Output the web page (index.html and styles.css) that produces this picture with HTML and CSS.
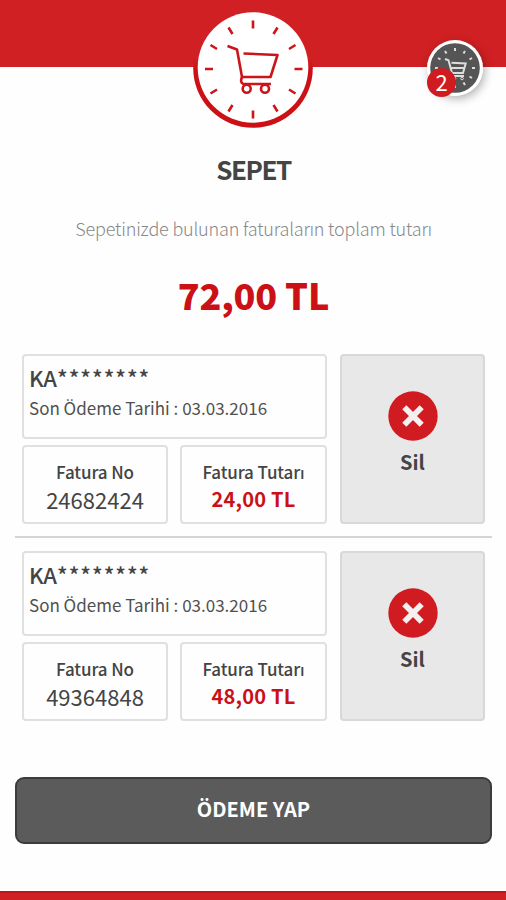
FILE: index.html
```html
<!DOCTYPE html>
<html lang="tr">
<head>
  <meta charset="UTF-8">
  <title>Sepet</title>
  <link rel="stylesheet" href="styles.css">
</head>
<body>
  <!-- Header -->
  <div class="header">
    <svg class="logo" viewBox="0 0 120 120" fill="none" stroke="#cc1419">
      <!-- ring blends into the header at the top -->
      <linearGradient id="ring" x1="0" y1="0" x2="0" y2="1">
        <stop offset="0.42" stop-color="#d02023"/>
        <stop offset="0.52" stop-color="#cb1016"/>
      </linearGradient>
      <circle cx="60" cy="60" r="59.800" fill="url(#ring)" stroke="none"/>
      <circle cx="60" cy="59.500" r="55.300" fill="#fff" stroke="none"/>
      <g stroke-width="2.600">
        <path d="M60 12.500v8M60 102.500v8M12 61h8M101.500 61h8"/>
        <path d="M35.500 19.500l4 6.500M84.500 19.500l-4 6.500M17.500 37l6.500 4M102.500 37l-6.500 4"/>
        <path d="M17.500 85.500l6.500-4M102.500 85.500l-6.500-4M35.500 103.500l4-6.500M84.500 103.500l-4-6.500"/>
      </g>
      <g stroke-width="2.600" stroke-linejoin="round">
        <path d="M34.500 38l9.500 3.500 5 27.500h28.500l7-22-34-1.500"/>
        <path d="M49 69c-1.500 3.500-1 6.500 1.500 7h27.500"/>
        <circle cx="53.700" cy="80.800" r="4"/>
        <circle cx="72" cy="80.800" r="4"/>
      </g>
    </svg>
    <div class="cart-badge">
      <svg viewBox="0 0 56 56" fill="none" stroke="#ddd">
        <circle cx="28" cy="28" r="28" fill="#fff" stroke="none"/>
        <circle cx="28" cy="28" r="24.800" fill="#555" stroke="none"/>
        <g stroke-width="2">
          <path d="M28 8v3M28 45v3M8 28h3M45 28h3"/>
          <path d="M18 11l1.500 2.500M38 11l-1.500 2.500M11 18l2.500 1.500M45 18l-2.500 1.500M45 38l-2.500-1.500M38 45l-1.500-2.500"/>
        </g>
        <path stroke-width="2" d="M18 19l3.500 1.300 3.500 12.700h11l2.700-9.500-14.200-.8M26 36h11M24.500 28h12.500"/>
        <circle cx="27.500" cy="38.500" r="1.300"/>
        <circle cx="35" cy="38.500" r="1.300"/>
      </svg>
      <span class="count">2</span>
    </div>
  </div>

  <div class="content">
    <h1 class="title">SEPET</h1>
    <p class="subtitle">Sepetinizde bulunan faturaların toplam tutarı</p>
    <p class="total">72,00 TL</p>

    <!-- Bills -->
    <div class="bill">
      <div class="bill-info">
        <div class="box owner">
          <h2 class="name">KA<span class="mask">********</span></h2>
          <p class="due">Son Ödeme Tarihi : 03.03.2016</p>
        </div>
        <div class="box detail">
          <span class="label">Fatura No</span>
          <span class="number">24682424</span>
        </div>
        <div class="box detail">
          <span class="label">Fatura Tutarı</span>
          <span class="amount">24,00 TL</span>
        </div>
      </div>
      <button class="box delete-btn">
        <svg class="delete-icon" viewBox="0 0 50 50">
          <circle cx="25" cy="25" r="24.700" fill="#d01c21"/>
          <path d="M16.300 16.300l17.400 17.400M33.700 16.300l-17.400 17.400" stroke="#f4f0f0" stroke-width="5.800"/>
        </svg>
        <span>Sil</span>
      </button>
    </div>

    <div class="bill">
      <div class="bill-info">
        <div class="box owner">
          <h2 class="name">KA<span class="mask">********</span></h2>
          <p class="due">Son Ödeme Tarihi : 03.03.2016</p>
        </div>
        <div class="box detail">
          <span class="label">Fatura No</span>
          <span class="number">49364848</span>
        </div>
        <div class="box detail">
          <span class="label">Fatura Tutarı</span>
          <span class="amount">48,00 TL</span>
        </div>
      </div>
      <button class="box delete-btn">
        <svg class="delete-icon" viewBox="0 0 50 50">
          <circle cx="25" cy="25" r="24.700" fill="#d01c21"/>
          <path d="M16.300 16.300l17.400 17.400M33.700 16.300l-17.400 17.400" stroke="#f4f0f0" stroke-width="5.800"/>
        </svg>
        <span>Sil</span>
      </button>
    </div>

    <button class="pay-btn">ÖDEME YAP</button>
  </div>

  <!-- Footer -->
  <div class="footer"></div>
</body>
</html>
```
FILE: styles.css
```css
* {
  box-sizing: border-box;
}

body {
  font-family: "Noto Sans CJK SC", "Noto Sans", sans-serif;
  margin: 0;
  height: 900px;
  display: flex;
  flex-direction: column;
  background-color: #fefefe;
  color: #444;
}

h1, h2, p {
  margin: 0;
}

button {
  font-family: inherit;
  color: inherit;
}

.header {
  position: relative;
  display: flex;
  justify-content: center;
  align-items: flex-start;
  height: 67px;
  background-color: #d02023;
}

.logo {
  flex: none;
  width: 120px;
  height: 120px;
  margin-top: 8px;
}

.cart-badge {
  position: absolute;
  top: 40px;
  left: 427px;
  width: 56px;
  height: 56px;
  border-radius: 50%;
  box-shadow: 2px 3px 10px rgba(0,0,0,0.3);
}

.cart-badge svg {
  display: block;
}

.count {
  position: absolute;
  left: 0;
  top: 28px;
  width: 29px;
  height: 29px;
  border-radius: 50%;
  background-color: #d01c21;
  color: white;
  font-size: 22px;
  line-height: 27px;
  text-align: center;
}

.content {
  flex: 1;
  display: flex;
  flex-direction: column;
  padding: 84px 14px 0 15px;
  text-align: center;
}

.title {
  font-size: 26px;
  font-weight: bold;
  line-height: 35px;
  letter-spacing: -1.5px;
}

.subtitle {
  margin-top: 25px;
  font-size: 18px;
  font-weight: 300;
  line-height: 34px;
  letter-spacing: -0.18px;
  color: #888;
}

.total {
  margin-top: 24px;
  font-size: 36px;
  font-weight: 900;
  line-height: 50px;
  letter-spacing: -0.2px;
  color: #cb1016;
}

/* Bill rows */
.bill {
  display: flex;
  gap: 13px;
  padding: 13px 7px 12px;
  border-bottom: 2px solid #d5d5d5;
}

.total + .bill {
  padding-top: 35px;
}

.bill:nth-of-type(2) {
  border-bottom: none;
}

.bill-info {
  flex: none;
  width: 305px;
  display: grid;
  grid-template-columns: 146px 147px;
  grid-template-rows: 85px 79px;
  gap: 6px 12px;
}

.box {
  background-color: #fefefe;
  border: 2px solid #e0e0e0;
  border-radius: 4px;
}

.owner {
  grid-column: span 2;
  padding: 5px 5px 0;
  text-align: left;
}

.name {
  font-size: 22px;
  font-weight: 500;
  line-height: 32px;
}

.mask {
  letter-spacing: 1px;
}

.due {
  font-size: 17px;
  line-height: 30px;
  color: #505050;
}

.detail {
  display: flex;
  flex-direction: column;
  align-items: center;
  padding-top: 12px;
}

.label {
  font-size: 17px;
  font-weight: 500;
  line-height: 25px;
  letter-spacing: -0.1px;
}

.number {
  font-size: 22px;
  line-height: 30px;
}

.amount {
  font-size: 20px;
  font-weight: bold;
  line-height: 30px;
  letter-spacing: 0.2px;
  color: #cb1016;
}

.delete-btn {
  flex: 1;
  display: flex;
  flex-direction: column;
  align-items: center;
  padding: 35px 0 0;
  background-color: #e8e8e8;
  border-color: #d8d8d8;
  font-size: 20px;
  font-weight: bold;
  line-height: 30px;
}

.delete-icon {
  width: 50px;
  height: 50px;
  margin-bottom: 6px;
}

.pay-btn {
  height: 67px;
  margin-top: 44px;
  padding: 0 0 4px;
  background-color: #5b5b5b;
  border: 2px solid #3c3c3c;
  border-radius: 9px;
  color: white;
  font-size: 20px;
  font-weight: bold;
}

.footer {
  height: 9px;
  background-color: #d02023;
  border-top: 2px solid #c0161a;
}
```
